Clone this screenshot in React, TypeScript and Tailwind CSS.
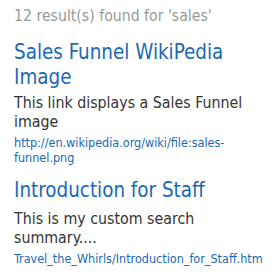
import React from "react";

type Result = {
    title: string
    summary: string
    url: string
    gap: string
    summaryGap: string
    urlGap: string
}

const results: Result[] = [
    {
        title: "Sales Funnel WikiPedia Image",
        summary: "This link displays a Sales Funnel image",
        url: "http://en.wikipedia.org/wiki/file:sales-funnel.png",
        gap: "mt-[14px]",
        summaryGap: "mt-[3px]",
        urlGap: "mt-[4px]"
    },
    {
        title: "Introduction for Staff",
        summary: "This is my custom search summary....",
        url: "Travel_the_Whirls/Introduction_for_Staff.htm",
        gap: "mt-[13px]",
        summaryGap: "mt-[6px]",
        urlGap: "mt-[4px]"
    }
]

export default function App() {
    return (
        <div className="w-[274px] h-[275px] bg-white pl-[14px] pr-[8px] pt-[6px] overflow-hidden font-stretch-condensed font-['DejaVu_Sans_Condensed','DejaVu_Sans',sans-serif]">
            <p className="text-[15.7px] leading-[20px] text-[#999999]">12 result(s) found for 'sales'</p>
            {results.map((result, i) => (
                <div key={i} className={result.gap}>
                    <a href="#" className="block text-[20.4px] leading-[25px] text-[#1a69b5]">{result.title}</a>
                    <p className={"text-[15.8px] leading-[19px] text-[#333333] " + result.summaryGap}>{result.summary}</p>
                    <a href="#" className={"block text-[12.5px] leading-[15px] text-[#1a69b5] break-words " + result.urlGap}>{result.url}</a>
                </div>
            ))}
        </div>
    )
}
